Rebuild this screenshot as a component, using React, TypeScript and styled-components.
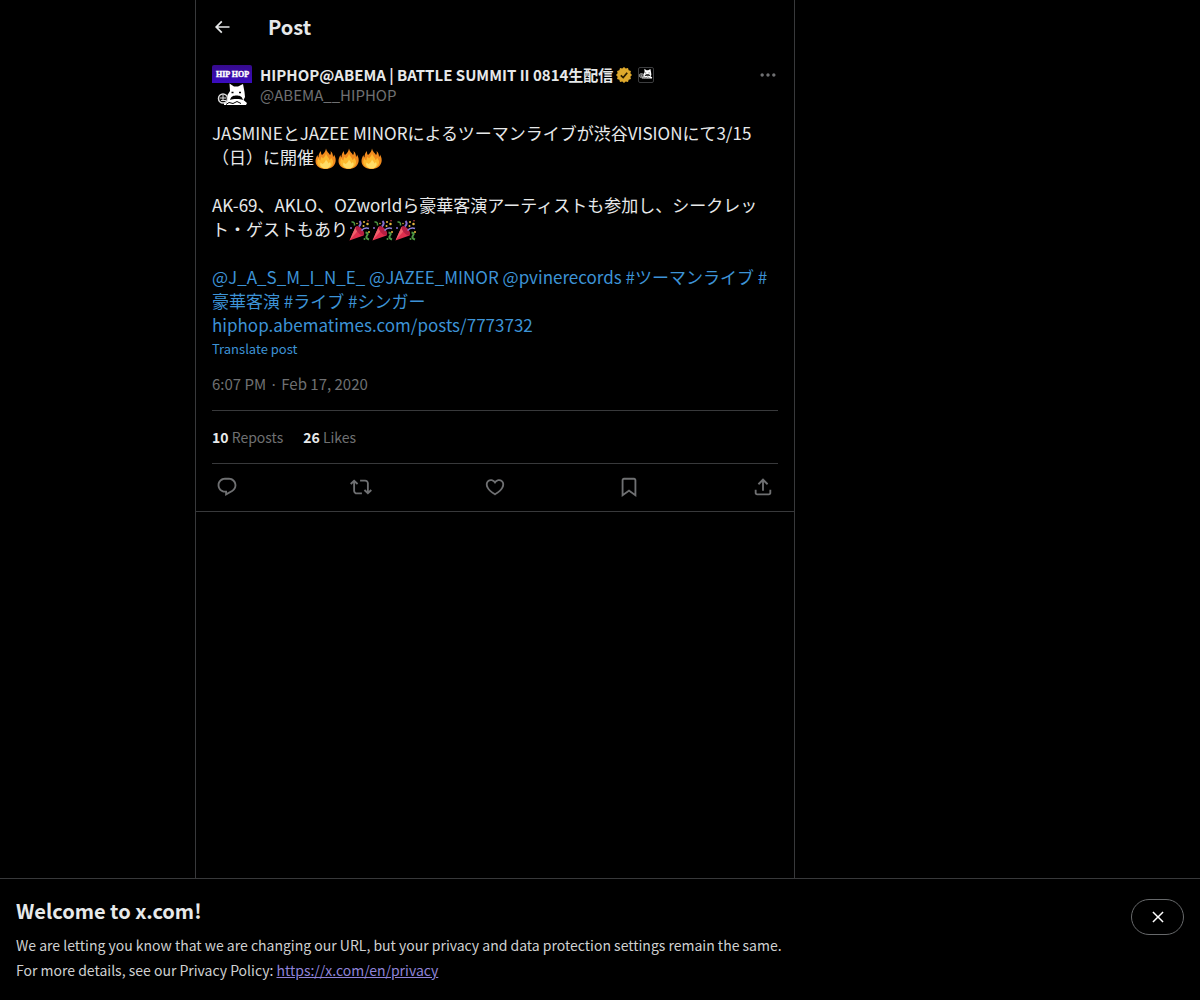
import React from "react";
import styled, { createGlobalStyle } from "styled-components";

const colors = {
  text: "#e7e9ea",
  muted: "#6f7072",
  line: "#38393b",
  link: "#3d93d6",
};

const GlobalStyle = createGlobalStyle`
  *, *::before, *::after { box-sizing: border-box; }
  body {
    margin: 0;
    background: #000;
    color: ${colors.text};
    font-family: "Noto Sans CJK JP", "Noto Sans", sans-serif;
    font-size: 15px;
    line-height: 20px;
  }
  h1, h2, p { margin: 0; }
`;

const Page = styled.div`
  display: flex;
  flex-direction: column;
  min-height: 100vh;
`;

const Layout = styled.div`
  flex: 1;
  display: grid;
  grid-template-columns: minmax(0, 195fr) minmax(0, 600px) minmax(0, 405fr);
`;

const Column = styled.main`
  grid-column: 2;
  border: solid ${colors.line};
  border-width: 0 1px;
`;

const TopBar = styled.header`
  display: flex;
  align-items: center;
  gap: 36px;
  height: 53px;
  padding: 0 16px;
`;

const IconButton = styled.button`
  display: flex;
  padding: 0;
  border: 0;
  background: none;
  color: ${colors.muted};
  cursor: pointer;
`;

const BackButton = styled(IconButton)`
  width: 20px;
  color: ${colors.text};
`;

const Title = styled.h1`
  font-size: 20px;
  line-height: 24px;
  font-weight: 700;
`;

const Post = styled.article`
  padding: 12px 16px 0;
  border-bottom: 1px solid ${colors.line};
`;

const Author = styled.div`
  display: flex;
  gap: 8px;
`;

const AuthorText = styled.div`
  flex: 1;
  min-width: 0;
`;

const NameRow = styled.div`
  display: flex;
  align-items: center;
  gap: 3px;
`;

const Name = styled.a`
  color: ${colors.text};
  font-weight: 700;
  text-decoration: none;
  white-space: nowrap;
`;

const Handle = styled.a`
  display: block;
  color: ${colors.muted};
  text-decoration: none;
`;

const Badges = styled.span`
  display: flex;
  align-items: center;
  gap: 6px;
`;

const MoreButton = styled(IconButton)`
  align-self: flex-start;
`;

const Body = styled.div`
  margin-top: 16px;
  font-size: 17px;
  line-height: 24px;
  white-space: pre-wrap;
  overflow-wrap: break-word;
`;

const EmojiSvg = styled.svg`
  width: 21px;
  height: 21px;
  margin: 0 1px;
  vertical-align: -5px;
`;

const TextLink = styled.a`
  color: ${colors.link};
  text-decoration: none;
`;

const Translate = styled.button`
  display: block;
  padding: 0;
  border: 0;
  background: none;
  color: ${colors.link};
  font: inherit;
  font-size: 13px;
  line-height: 24px;
  cursor: pointer;
`;

const Stamp = styled.p`
  padding: 13px 0 16px;
  color: ${colors.muted};
`;

const Stats = styled.div`
  display: flex;
  gap: 20px;
  padding: 16px 0;
  border: solid ${colors.line};
  border-width: 1px 0;
  font-size: 14px;
  color: ${colors.muted};

  strong {
    color: ${colors.text};
  }
`;

const Actions = styled.div`
  display: flex;
  justify-content: space-between;
  padding: 12px 4px 13px;
`;

const Notice = styled.footer`
  display: flex;
  align-items: flex-start;
  justify-content: space-between;
  gap: 16px;
  padding: 20px 16px 17px;
  border-top: 1px solid ${colors.line};
`;

const NoticeTitle = styled.h2`
  margin-bottom: 10px;
  font-size: 20px;
  line-height: 24px;
  font-weight: 700;
`;

const NoticeText = styled.p`
  font-size: 14px;
  line-height: 25px;
  color: #cfd0d1;

  a {
    color: #8f83d8;
  }
`;

const CloseButton = styled.button`
  display: flex;
  align-items: center;
  justify-content: center;
  width: 53px;
  height: 36px;
  padding: 0;
  border: 1px solid #67696b;
  border-radius: 18px;
  background: none;
  color: #fff;
  cursor: pointer;
`;

const paths = {
  back: "M7.414 13l5.043 5.04-1.414 1.42L3.586 12l7.457-7.46 1.414 1.42L7.414 11H21v2H7.414z",
  more: "M3 12c0-1.1.9-2 2-2s2 .9 2 2-.9 2-2 2-2-.9-2-2zm9 2c1.1 0 2-.9 2-2s-.9-2-2-2-2 .9-2 2 .9 2 2 2zm7 0c1.1 0 2-.9 2-2s-.9-2-2-2-2 .9-2 2 .9 2 2 2z",
  reply:
    "M1.751 10c0-4.42 3.584-8 8.005-8h4.366c4.49 0 8.129 3.64 8.129 8.13 0 2.96-1.607 5.68-4.196 7.11l-8.054 4.46v-3.69h-.067c-4.49.1-8.183-3.51-8.183-8.01zm8.005-6c-3.317 0-6.005 2.69-6.005 6 0 3.37 2.77 6.08 6.138 6.01l.351-.01h1.761v2.3l5.087-2.81c1.951-1.08 3.163-3.13 3.163-5.36 0-3.39-2.744-6.13-6.129-6.13H9.756z",
  repost:
    "M4.5 3.88l4.432 4.14-1.364 1.46L5.5 7.55V16c0 1.1.896 2 2 2H13v2H7.5c-2.209 0-4-1.79-4-4V7.55L1.432 9.48.068 8.02 4.5 3.88zM16.5 6H11V4h5.5c2.209 0 4 1.79 4 4v8.45l2.068-1.93 1.364 1.46-4.432 4.14-4.432-4.14 1.364-1.46 2.068 1.93V8c0-1.1-.896-2-2-2z",
  like: "M16.697 5.5c-1.222-.06-2.679.51-3.89 2.16l-.805 1.09-.806-1.09C9.984 6.01 8.526 5.44 7.304 5.5c-1.243.07-2.349.78-2.91 1.91-.552 1.12-.633 2.78.479 4.82 1.074 1.97 3.257 4.27 7.129 6.61 3.87-2.34 6.052-4.64 7.126-6.61 1.111-2.04 1.03-3.7.477-4.82-.561-1.13-1.666-1.84-2.908-1.91zm4.187 7.69c-1.351 2.48-4.001 5.12-8.379 7.67l-.503.3-.504-.3c-4.379-2.55-7.029-5.19-8.382-7.67-1.36-2.5-1.41-4.86-.514-6.67.887-1.79 2.647-2.91 4.601-3.01 1.651-.09 3.368.56 4.798 2.01 1.429-1.45 3.146-2.1 4.796-2.01 1.954.1 3.714 1.22 4.601 3.01.896 1.81.846 4.17-.514 6.67z",
  bookmark:
    "M4 4.5C4 3.12 5.119 2 6.5 2h11C18.881 2 20 3.12 20 4.5v18.44l-8-5.71-8 5.71V4.5zM6.5 4c-.276 0-.5.22-.5.5v14.56l6-4.29 6 4.29V4.5c0-.28-.224-.5-.5-.5h-11z",
  share:
    "M12 2.59l5.7 5.7-1.41 1.42L13 6.41V16h-2V6.41l-3.3 3.3-1.41-1.42L12 2.59zM21 15l-.02 3.51c0 1.38-1.12 2.49-2.5 2.49H5.5C4.11 21 3 19.88 3 18.5V15h2v3.5c0 .28.22.5.5.5h12.98c.28 0 .5-.22.5-.5L19 15h2z",
  close:
    "M10.59 12L4.54 5.96l1.42-1.42L12 10.59l6.04-6.05 1.42 1.42L13.41 12l6.05 6.04-1.42 1.42L12 13.41l-6.04 6.05-1.42-1.42L10.59 12z",
};

function Icon({ name, size }: { name: keyof typeof paths; size: number }) {
  return (
    <svg viewBox="0 0 24 24" width={size} height={size} fill="currentColor" aria-hidden="true">
      <path d={paths[name]} />
    </svg>
  );
}

function Fire() {
  return (
    <EmojiSvg viewBox="0 0 42 42" role="img" aria-label="🔥">
      <path
        d="M22 1c1 6 6 9 8 13 2-2 2-5 1-8 4 3 5 8 5 12 1-1 2-3 2-5 3 5 4 10 3 15-2 9-10 14-20 14S1 37 1 26c0-5 2-9 4-12 0 2 1 4 2 5 0-5 1-9 5-13 0 4 0 6 2 8 5-4 7-8 8-13z"
        fill="#f08a1d"
      />
      <path
        d="M22 11c1 5 6 8 7 13 2-1 3-3 3-5 4 5 6 10 2 16-3 4-8 6-13 6S9 39 6 34c-3-5-1-10 1-14 1 3 2 4 4 5 0-4 1-6 3-8 0 2 1 3 2 4 3-3 5-6 6-10z"
        fill="#fdb92e"
      />
      <path
        d="M22 23c1 3 4 4 5 8l3-3c2 4 2 7-1 10-2 2-5 3-8 3s-7-1-9-4c-2-2-2-5-1-8l4 3c3-2 6-5 7-9z"
        fill="#ffdc66"
      />
    </EmojiSvg>
  );
}

function Party() {
  return (
    <EmojiSvg viewBox="0 0 42 42" role="img" aria-label="🎉">
      <path d="M1 41L13 14Q25 17 29 31Z" fill="#e0304e" />
      <path d="M1 41L13 14L19 20Z" fill="#f0606c" />
      <path d="M13 14Q17 9 25 17Q33 26 29 31Q24 32 17 24Q12 18 13 14Z" fill="#b51f42" />
      <path d="M5 4q7-1 6 7" fill="none" stroke="#4f9a45" strokeWidth="3" />
      <path d="M21 2q5 5-1 11" fill="none" stroke="#8670cf" strokeWidth="4" />
      <path d="M25 21q6-7 15-4" fill="none" stroke="#8c80d8" strokeWidth="3" />
      <path d="M33 25q7 1 3 6t4 8" fill="none" stroke="#4f9a45" strokeWidth="4" />
      <g fill="#e7b83e">
        <circle cx="30" cy="4" r="2" />
        <circle cx="37" cy="8" r="2.500" />
        <circle cx="29" cy="12" r="2" />
        <circle cx="40" cy="24" r="2" />
        <circle cx="16" cy="7" r="1.500" />
      </g>
      <circle cx="4" cy="16" r="2" fill="#8670cf" />
      <circle cx="38" cy="1.500" r="1.500" fill="#d9475a" />
      <circle cx="31" cy="38" r="2" fill="#4f9a45" />
    </EmojiSvg>
  );
}

function Mascot() {
  return (
    <>
      <path
        d="M15 37L15.500 30L18 26L17.500 18.500L22 21.500L26 21.500L31 19L32.500 27L33 32L31.500 35L35 38L34 40H12V38Z"
        fill="#fff"
      />
      <path d="M19.500 27.500h2M27 27.500h2" stroke="#000" strokeWidth="1.500" />
      <path d="M18 35c1-4 4-4.500 6.500-4.500S30 31 31 35c-2-1-3.500-1-6.500-1S20 34 18 35z" fill="#000" />
      <path d="M14 39.500l3-2 4 1 4-2 4 2" stroke="#000" strokeWidth="1" fill="none" />
      <circle cx="11" cy="33.500" r="4.500" fill="#111" stroke="#ddd" strokeWidth="1.500" />
      <path d="M8 33h6M9 35.500h5M11 30v6" stroke="#ddd" strokeWidth="1" />
    </>
  );
}

const AvatarText = styled.text`
  font-family: "Liberation Serif", serif;
  font-size: 8px;
  font-weight: 700;
`;

function Avatar() {
  return (
    <svg width="40" height="40" viewBox="0 0 40 40" role="img" aria-label="ABEMA HIPHOP">
      <defs>
        <linearGradient id="banner" x1="0" y1="0" x2="0" y2="1">
          <stop offset="0" stopColor="#360a8c" />
          <stop offset="1" stopColor="#3a0cc0" />
        </linearGradient>
      </defs>
      <path d="M2 0H38Q40 0 40 2V18H0V2Q0 0 2 0Z" fill="url(#banner)" />
      <AvatarText x="20.500" y="12" textAnchor="middle" fill="#fff" stroke="#fff" strokeWidth="0.400">
        HIP HOP
      </AvatarText>
      <Mascot />
    </svg>
  );
}

function VerifiedBadge() {
  const points = Array.from({ length: 24 }, (_, i) => {
    const r = i % 2 ? 6.6 : 8;
    const a = (i * Math.PI) / 12;
    return `${8 + r * Math.cos(a)},${8 + r * Math.sin(a)}`;
  }).join(" ");
  return (
    <svg width="16" height="16" viewBox="0 0 16 16" role="img" aria-label="Verified">
      <polygon points={points} fill="#dfa92c" />
      <path d="M4.800 8.300L7.200 10.600L11.200 5.700" fill="none" stroke="#2b1c00" strokeWidth="1.700" />
    </svg>
  );
}

function AffiliateBadge() {
  return (
    <svg width="16" height="16" viewBox="0 0 16 16" role="img" aria-label="ABEMA">
      <rect x="0.5" y="0.5" width="15" height="15" rx="1.5" fill="#000" stroke="#3c3d3f" />
      <g transform="translate(-1.500 -6.500) scale(0.450)">
        <Mascot />
      </g>
    </svg>
  );
}

const actions: { name: keyof typeof paths; label: string }[] = [
  { name: "reply", label: "Reply" },
  { name: "repost", label: "Repost" },
  { name: "like", label: "Like" },
  { name: "bookmark", label: "Bookmark" },
  { name: "share", label: "Share" },
];

export default function App() {
  return (
    <Page>
      <GlobalStyle />
      <Layout>
        <Column>
          <TopBar>
            <BackButton aria-label="Back">
              <Icon name="back" size={20} />
            </BackButton>
            <Title>Post</Title>
          </TopBar>
          <Post>
            <Author>
              <Avatar />
              <AuthorText>
                <NameRow>
                  <Name href="#profile">HIPHOP@ABEMA | BATTLE SUMMIT II 0814生配信</Name>
                  <Badges>
                    <VerifiedBadge />
                    <AffiliateBadge />
                  </Badges>
                </NameRow>
                <Handle href="#profile">@ABEMA__HIPHOP</Handle>
              </AuthorText>
              <MoreButton aria-label="More">
                <Icon name="more" size={20} />
              </MoreButton>
            </Author>
            <Body lang="ja">
              JASMINEとJAZEE MINORによるツーマンライブが渋谷VISIONにて3/15（日）に開催
              <Fire />
              <Fire />
              <Fire />
              {"\n\nAK-69、AKLO、OZworldら豪華客演アーティストも参加し、シークレット・ゲストもあり"}
              <Party />
              <Party />
              <Party />
              {"\n\n"}
              <TextLink href="#jasmine">@J_A_S_M_I_N_E_</TextLink>{" "}
              <TextLink href="#jazee">@JAZEE_MINOR</TextLink>{" "}
              <TextLink href="#pvine">@pvinerecords</TextLink>{" "}
              <TextLink href="#twoman">#ツーマンライブ</TextLink>{" "}
              <TextLink href="#guests">#豪華客演</TextLink>{" "}
              <TextLink href="#live">#ライブ</TextLink>{" "}
              <TextLink href="#singer">#シンガー</TextLink>
              {"\n"}
              <TextLink href="#article">hiphop.abematimes.com/posts/7773732</TextLink>
            </Body>
            <Translate>Translate post</Translate>
            <Stamp>6:07 PM · Feb 17, 2020</Stamp>
            <Stats>
              <span>
                <strong>10</strong> Reposts
              </span>
              <span>
                <strong>26</strong> Likes
              </span>
            </Stats>
            <Actions>
              {actions.map((action) => (
                <IconButton key={action.name} aria-label={action.label}>
                  <Icon name={action.name} size={22} />
                </IconButton>
              ))}
            </Actions>
          </Post>
        </Column>
      </Layout>
      <Notice>
        <div>
          <NoticeTitle>Welcome to x.com!</NoticeTitle>
          <NoticeText>
            We are letting you know that we are changing our URL, but your privacy and data
            protection settings remain the same.
          </NoticeText>
          <NoticeText>
            For more details, see our Privacy Policy: <a href="#privacy">https://x.com/en/privacy</a>
          </NoticeText>
        </div>
        <CloseButton aria-label="Close">
          <Icon name="close" size={18} />
        </CloseButton>
      </Notice>
    </Page>
  );
}
